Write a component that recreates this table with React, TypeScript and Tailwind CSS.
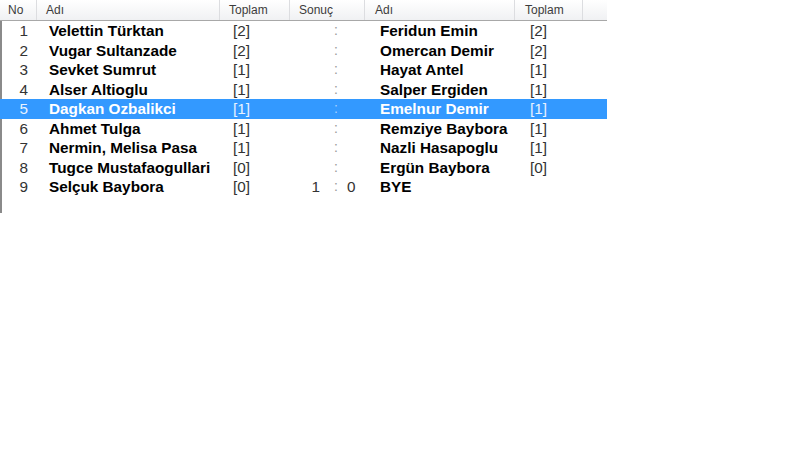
import React from "react";

type Pair = {
  no: number;
  white: string;
  wPts: string;
  black: string;
  bPts: string;
  result?: [string, string];
};

const pairs: Pair[] = [
  { no: 1, white: "Velettin Türktan", wPts: "[2]", black: "Feridun Emin", bPts: "[2]" },
  { no: 2, white: "Vugar Sultanzade", wPts: "[2]", black: "Omercan Demir", bPts: "[2]" },
  { no: 3, white: "Sevket Sumrut", wPts: "[1]", black: "Hayat Antel", bPts: "[1]" },
  { no: 4, white: "Alser Altioglu", wPts: "[1]", black: "Salper Ergiden", bPts: "[1]" },
  { no: 5, white: "Dagkan Ozbalikci", wPts: "[1]", black: "Emelnur Demir", bPts: "[1]" },
  { no: 6, white: "Ahmet Tulga", wPts: "[1]", black: "Remziye Baybora", bPts: "[1]" },
  { no: 7, white: "Nermin, Melisa Pasa", wPts: "[1]", black: "Nazli Hasapoglu", bPts: "[1]" },
  { no: 8, white: "Tugce Mustafaogullari", wPts: "[0]", black: "Ergün Baybora", bPts: "[0]" },
  { no: 9, white: "Selçuk Baybora", wPts: "[0]", black: "BYE", bPts: "", result: ["1", "0"] },
];

const cols = "grid grid-cols-[37px_183px_70px_75px_150px_68px_22px]";

export default function App() {
  const selected = 5;

  return (
    <div className="w-[800px] h-[449px] bg-white overflow-hidden" style={{ fontFamily: '"Liberation Sans", Arial, sans-serif' }}>
      <div className="w-[605px] h-[213px] border-l-2 border-[#8a8a8a]">
        {/* header */}
        <div className={`${cols} h-[21px] bg-gradient-to-b from-white to-[#f0f1f3] border-b border-[#a8a8a8] text-[12px] text-[#3c3c3c] -ml-[2px] w-[607px]`}>
          <div className="pl-[8px] leading-[20px] border-r border-[#dcdde0]">No</div>
          <div className="pl-[9px] leading-[20px] border-r border-[#dcdde0]">Adı</div>
          <div className="pl-[9px] leading-[20px] border-r border-[#dcdde0]">Toplam</div>
          <div className="pl-[9px] leading-[20px] border-r border-[#dcdde0]">Sonuç</div>
          <div className="pl-[10px] leading-[20px] border-r border-[#dcdde0]">Adı</div>
          <div className="pl-[10px] leading-[20px] border-r border-[#dcdde0]">Toplam</div>
          <div />
        </div>

        {/* rows */}
        <div className="-ml-[2px] w-[607px]">
          {pairs.map((p) => {
            const sel = p.no === selected;
            return (
              <div
                key={p.no}
                className={`${cols} h-[19.5px] items-center text-[15.3px] leading-[19px] ${
                  sel ? "bg-[#3399ff] text-white" : "text-black"
                }`}
              >
                <div className={`text-right pr-[9px] ${sel ? "text-[#e8f2ff]" : "text-[#333]"}`}>{p.no}</div>
                <div className="pl-[12px] font-bold whitespace-nowrap">{p.white}</div>
                <div className={`pl-[13px] ${sel ? "text-[#e8f2ff]" : "text-[#333]"}`}>{p.wPts}</div>
                <div className="flex items-center">
                  <span className={`w-[30px] text-right ${sel ? "" : "text-[#333]"}`}>{p.result ? p.result[0] : ""}</span>
                  <span className={`w-[27px] pl-[5px] text-center text-[14px] ${sel ? "text-[#a8d0ff]" : "text-[#9a9a9a]"}`}>:</span>
                  <span className={sel ? "" : "text-[#333]"}>{p.result ? p.result[1] : ""}</span>
                </div>
                <div className="pl-[15px] font-bold whitespace-nowrap">{p.black}</div>
                <div className={`pl-[15px] ${sel ? "text-[#e8f2ff]" : "text-[#333]"}`}>{p.bPts}</div>
                <div />
              </div>
            );
          })}
        </div>
      </div>
    </div>
  );
}
